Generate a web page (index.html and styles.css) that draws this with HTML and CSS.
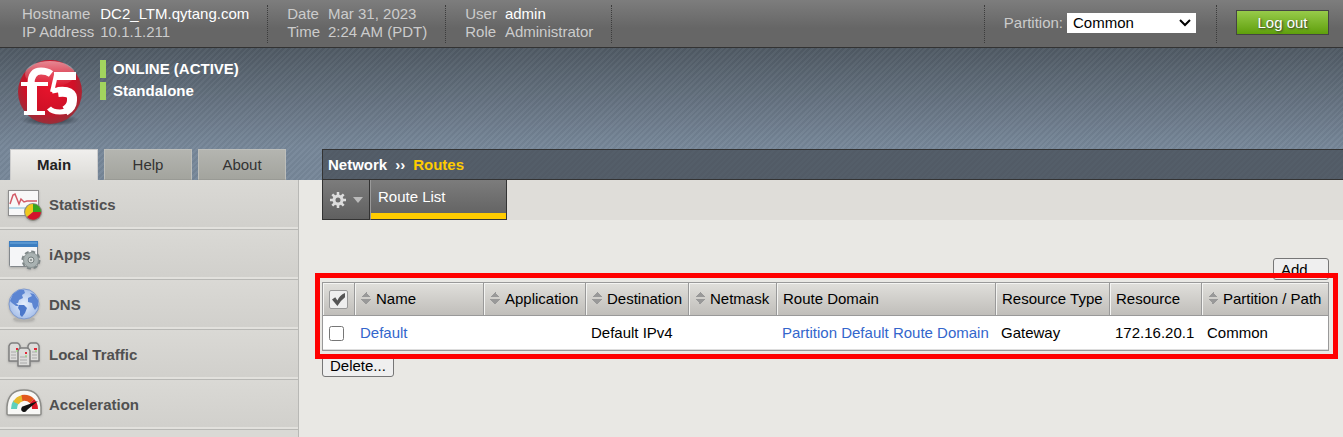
FILE: index.html
```html
<!DOCTYPE html>
<html lang="en">
<head>
<meta charset="utf-8">
<title>Network: Routes</title>
<link rel="stylesheet" href="styles.css">
</head>
<body>
<header class="topbar">
  <dl class="facts facts-host">
    <dt>Hostname</dt><dd class="strong">DC2_LTM.qytang.com</dd>
    <dt>IP Address</dt><dd>10.1.1.211</dd>
  </dl>
  <dl class="facts">
    <dt>Date</dt><dd>Mar 31, 2023</dd>
    <dt>Time</dt><dd>2:24 AM (PDT)</dd>
  </dl>
  <dl class="facts">
    <dt>User</dt><dd class="strong">admin</dd>
    <dt>Role</dt><dd>Administrator</dd>
  </dl>
  <div class="partition">
    <label for="partition">Partition:</label>
    <div class="select">
      <select id="partition"><option>Common</option></select>
      <svg class="select-arrow" viewBox="0 0 12 8"><path d="M1 1L6 6L11 1" fill="none" stroke="#000" stroke-width="2"/></svg>
    </div>
  </div>
  <div class="session"><button class="logout" type="button">Log out</button></div>
</header>

<div class="banner">
  <div class="brand">
    <div class="brand-row">
      <svg class="logo" viewBox="0 0 76 76" role="img" aria-label="f5">
        <defs>
          <radialGradient id="ball" cx=".5" cy=".42" r=".58">
            <stop offset="0" stop-color="#e8142c"/><stop offset=".65" stop-color="#d01027"/><stop offset="1" stop-color="#96303a"/>
          </radialGradient>
          <linearGradient id="gloss" x2="0" y2="1">
            <stop offset="0" stop-color="#fff" stop-opacity=".5"/><stop offset="1" stop-color="#fff" stop-opacity="0"/>
          </linearGradient>
          <radialGradient id="shade"><stop offset="0" stop-color="#1c222a" stop-opacity=".9"/><stop offset="1" stop-color="#1c222a" stop-opacity="0"/></radialGradient>
        </defs>
        <ellipse cx="38" cy="62" rx="30" ry="6" fill="url(#shade)"/>
        <circle cx="38" cy="34" r="32" fill="url(#ball)"/>
        <ellipse cx="38" cy="16" rx="25" ry="13" fill="url(#gloss)"/>
        <g fill="none" stroke="#fff">
          <path d="M20 55V24" stroke-width="10"/>
          <path d="M19 26Q19 13 29 13Q35 13 39 16" stroke-width="7"/>
          <path d="M9 26H36M12 55H33" stroke-width="4"/>
          <path d="M64 18H42" stroke-width="8"/>
          <path d="M44 17L40 34" stroke-width="4"/>
          <path d="M40 33Q62 28 62 42Q61 54 48 54Q40 54 37 50" stroke-width="5"/>
          <path d="M46 34Q61 32 60 42Q60 49 53 53" stroke-width="10"/>
        </g>
      </svg>
      <ul class="status">
        <li>ONLINE (ACTIVE)</li>
        <li>Standalone</li>
      </ul>
    </div>
    <nav class="tabs" aria-label="Sections">
      <a class="tab tab-on" href="#main">Main</a>
      <a class="tab" href="#help">Help</a>
      <a class="tab" href="#about">About</a>
    </nav>
  </div>
  <div class="crumbs"><span>Network</span><span>››</span><span class="crumb-now">Routes</span></div>
</div>

<div class="body">
  <nav class="side" aria-label="Main">
    <a class="side-item" href="#statistics">
      <svg class="side-icon" viewBox="0 0 36 36">
        <rect x="1.500" y="3.500" width="30" height="25" fill="#f8f8f8" stroke="#8d8d8d"/>
        <path d="M2 21H31" stroke="#b9d7e8" stroke-width="2"/>
        <path d="M3 17L6 8L8 7L12 17L14 12L17 15L20 14H30" fill="none" stroke="#d25a66" stroke-width="1.500"/>
        <circle cx="26" cy="25" r="9" fill="#8a8a80"/>
        <path d="M26 25V17A8 8 0 0 0 20 30Z" fill="#f0c81c"/>
        <path d="M26 25V17A8 8 0 0 1 34 25Z" fill="#37a51e"/>
        <path d="M26 25H34A8 8 0 0 1 20 30Z" fill="#d3142c"/>
      </svg>Statistics</a>
    <a class="side-item" href="#iapps">
      <svg class="side-icon" viewBox="0 0 36 36">
        <rect x="2.500" y="4.500" width="28" height="25" rx="1" fill="#f5f6f8" stroke="#83888c"/>
        <rect x="2" y="4" width="29" height="6" fill="#3c7ec1"/><path d="M3 6H30" stroke="#75aee0"/>
        <circle cx="24" cy="23" r="8.500" fill="none" stroke="#7c8586" stroke-width="2" stroke-dasharray="4 2.670"/>
        <circle cx="24" cy="23" r="7.500" fill="#a9b2b2" stroke="#8b9494"/>
        <circle cx="24" cy="23" r="3" fill="#d5d9d8" stroke="#778080"/><circle cx="24" cy="23" r="1" fill="#808888"/>
      </svg>iApps</a>
    <a class="side-item" href="#dns">
      <svg class="side-icon" viewBox="0 0 36 36">
        <defs><radialGradient id="sea"><stop offset="0" stop-color="#e4eefc"/><stop offset="1" stop-color="#a9c1ea"/></radialGradient></defs>
        <ellipse cx="17" cy="32" rx="11" ry="2" fill="#b4b3af"/>
        <circle cx="17" cy="17" r="15" fill="url(#sea)" stroke="#7f9ace"/>
        <path d="M3 14L6 7L12 3L17 3L18 6L15 8L16 11L12 13L11 16L9 16L12 19L9 19L5 16Z" fill="#5c85d2"/>
        <path d="M12 18L17 18L20 21L18 26L15 30L13 28L13 24L11 21Z" fill="#4c78cb"/>
        <path d="M23 6L27 7L31 13L31 19L28 23L26 20L25 16L21 15L21 11L25 9Z" fill="#5c85d2"/>
      </svg>DNS</a>
    <a class="side-item" href="#local-traffic">
      <svg class="side-icon" viewBox="0 0 36 36">
        <g fill="#dcdcda" stroke="#808080" stroke-width="1.500" stroke-linejoin="round">
          <path d="M2 24V9Q3 6 5 6H10Q12 6 13 9V24Z"/><path d="M21 24V9Q22 6 24 6H29Q31 6 32 9V24Z"/>
          <path d="M11 29V14Q12 11 14 11H20Q22 11 23 14V29Z"/>
        </g>
        <path d="M4 15H9M4 18H9M4 21H9M25 15H30M25 18H30M25 21H30M13 20H20M13 23H20M13 26H20" stroke="#aaa"/>
        <path d="M9 12H11M27 12H30M18 16H20" stroke="#e02938" stroke-width="2"/>
        <path d="M9 14H11M28 14H30M18 19H20" stroke="#83d669"/>
      </svg>Local Traffic</a>
    <a class="side-item" href="#acceleration">
      <svg class="side-icon" viewBox="0 0 36 36">
        <path d="M0 27V20Q1 3 17 3Q33 3 34 20V27Q34 28 32 28H2Q0 28 0 27Z" fill="#f8f8f6" stroke="#8c8c88" stroke-width="1.500"/>
        <g fill="none" stroke-width="6">
          <path d="M7 22Q7 18 9 15" stroke="#5fd0bd"/><path d="M9 16Q11 12 16 11" stroke="#e7b92c"/>
          <path d="M15 11Q21 10 25 14" stroke="#e2581e"/><path d="M25 14Q28 17 28 22" stroke="#db1727"/>
        </g>
        <path d="M31 14L20 23A3 3 0 1 1 17 19Z" fill="#111"/>
      </svg>Acceleration</a>
    <div class="side-rest"></div>
  </nav>

  <main class="main">
    <div class="menubar">
      <button class="gear" type="button" aria-label="Options">
        <svg class="gear-icon" viewBox="0 0 16 16"><circle cx="8" cy="8" r="4" fill="none" stroke="#ddd" stroke-width="3"/><path d="M8 0V3M8 13V16M0 8H3M13 8H16M2.300 2.300L4.500 4.500M11.500 11.500L13.700 13.700M2.300 13.700L4.500 11.500M11.500 4.500L13.700 2.300" stroke="#ddd" stroke-width="2.500"/></svg>
        <svg class="gear-caret" viewBox="0 0 10 6"><path d="M0 0H10L5 6Z" fill="#bbb"/></svg>
      </button>
      <a class="menu-tab" href="#route-list">Route List</a>
    </div>
    <div class="content">
      <div class="actions-top"><button class="btn" type="button">Add...</button></div>
      <div class="marked">
        <table class="routes">
          <colgroup><col class="c-check"><col><col class="c-app"><col class="c-dest"><col class="c-mask"><col class="c-domain"><col class="c-type"><col class="c-res"><col class="c-path"></colgroup>
          <thead>
            <tr>
              <th><button class="check-all" type="button" aria-label="Select all"><svg viewBox="0 0 12 12"><path d="M0 6L3 4L5 7Q7 2 12 0V4Q8 7 5 12Z" fill="#555"/></svg></button></th>
              <th><span class="sort"></span>Name</th>
              <th><span class="sort"></span>Application</th>
              <th><span class="sort"></span>Destination</th>
              <th><span class="sort"></span>Netmask</th>
              <th>Route Domain</th>
              <th>Resource Type</th>
              <th>Resource</th>
              <th><span class="sort"></span>Partition / Path</th>
            </tr>
          </thead>
          <tbody>
            <tr>
              <td><input class="pick" type="checkbox" aria-label="Select Default"></td>
              <td><a href="#default">Default</a></td>
              <td></td>
              <td>Default IPv4</td>
              <td></td>
              <td><a href="#domain">Partition Default Route Domain</a></td>
              <td>Gateway</td>
              <td>172.16.20.1</td>
              <td>Common</td>
            </tr>
          </tbody>
        </table>
      </div>
      <button class="btn" type="button">Delete...</button>
    </div>
  </main>
</div>
</body>
</html>
```
FILE: styles.css
```css
* { box-sizing: border-box; }
body {
  margin: 0;
  height: 100vh;
  display: flex;
  flex-direction: column;
  overflow: hidden;
  background: #e9e8e4;
  color: #000;
  font: 15px/18px "Liberation Sans", Arial, sans-serif;
}
a { color: #36c; text-decoration: none; }
button, select { font: inherit; }

.topbar {
  flex: none;
  display: flex;
  padding: 5px 14px 4px 2px;
  border-bottom: 1px solid #333;
  background: linear-gradient(#7d7d7d, #666 60%, #666);
  color: #ccc;
}
.facts {
  display: grid;
  grid-template-columns: auto auto;
  column-gap: 8px;
  align-content: start;
  margin: 0;
  padding: 0 18px 2px 19px;
  border-right: 1px dotted #3c3c3c;
}
.facts-host { column-gap: 6px; padding-left: 20px; }
.facts dd { margin: 0; }
.strong { color: #fff; }
.partition {
  display: flex;
  align-items: center;
  gap: 4px;
  margin-left: auto;
  padding: 0 20px 2px 19px;
  border-left: 1px dotted #3c3c3c;
  border-right: 1px dotted #3c3c3c;
}
.select { position: relative; }
.select select {
  display: block;
  width: 129px;
  height: 20px;
  padding: 0 6px;
  border: 0;
  border-radius: 0;
  appearance: none;
  background: #fff;
  color: #000;
}
.select-arrow {
  position: absolute;
  top: 6px;
  right: 5px;
  width: 12px;
  height: 8px;
  pointer-events: none;
}
.session { padding: 5px 0 0 19px; }
.logout {
  display: block;
  width: 93px;
  height: 25px;
  padding: 0;
  border: 1px solid #444;
  background: linear-gradient(#97cb4a, #5f9f0c);
  color: #fff;
  text-shadow: 1px 1px 2px #333;
}

.banner {
  flex: none;
  display: flex;
  align-items: flex-end;
  height: 132px;
  background:
    repeating-linear-gradient(135deg, rgba(0, 0, 0, .03) 0 2px, rgba(255, 255, 255, .03) 2px 4px),
    linear-gradient(#505a64, #778799 75%);
}
.brand {
  flex: none;
  display: flex;
  flex-direction: column;
  justify-content: space-between;
  width: 322px;
  height: 100%;
}
.brand-row { display: flex; padding: 10px 0 0 12px; }
.logo { width: 76px; height: 76px; }
.status {
  display: grid;
  gap: 4px;
  align-content: start;
  margin: 2px 0 0 12px;
  padding: 0;
  list-style: none;
  color: #fff;
  font-weight: bold;
}
.status li { padding-left: 7px; border-left: 6px solid #a2d45e; }
.tabs { display: flex; gap: 6px; padding-left: 10px; }
.tab {
  width: 88px;
  height: 31px;
  border: 1px solid #bdbeba;
  border-bottom-color: #999a95;
  background: linear-gradient(#b4b5b0, #a3a49e);
  color: #333;
  line-height: 30px;
  text-align: center;
}
.tab-on {
  border-color: #ccc;
  border-bottom: 0;
  background: linear-gradient(#f0efed, #dcdbd7);
  color: #222;
  font-weight: bold;
}
.crumbs {
  flex: 1;
  display: flex;
  gap: 8px;
  height: 31px;
  padding-left: 5px;
  border: 1px solid #333;
  border-right: 0;
  background: repeating-linear-gradient(135deg, #525b66 0 2px, #545e69 2px 4px);
  color: #fff;
  font-weight: bold;
  line-height: 29px;
}
.crumb-now { color: #fc0; }

.body { flex: 1; display: flex; min-height: 0; }
.side {
  flex: none;
  display: flex;
  flex-direction: column;
  width: 299px;
  border-right: 1px solid #b8b8b5;
}
.side-item {
  flex: none;
  display: flex;
  align-items: center;
  gap: 6px;
  height: 50px;
  padding-left: 7px;
  border-bottom: 1px solid #b8b8b5;
  background: linear-gradient(#dad9d5, #d1d0cc) 0 0 / 100% 47px no-repeat #e2e1dd;
  color: #505050;
  font-weight: bold;
}
.side-icon { width: 36px; height: 36px; overflow: visible; filter: drop-shadow(0 1px 1px #8888); }
.side-rest { flex: 1; background: #dad9d5; }

.main { flex: 1; min-width: 0; padding-left: 23px; }
.menubar { display: flex; height: 40px; background: #dfddd9; }
.gear, .menu-tab {
  border: 1px solid #333;
  border-top: 0;
  background: linear-gradient(#7c7c7c, #606060);
}
.gear {
  display: flex;
  align-items: center;
  gap: 7px;
  width: 48px;
  padding: 0 7px;
}
.gear-icon { flex: none; width: 16px; height: 16px; }
.gear-caret { flex: none; width: 10px; height: 6px; }
.menu-tab {
  width: 137px;
  padding: 8px 7px;
  border-left: 1px solid #999;
  box-shadow: inset 0 -6px #fc0;
  color: #fff;
}

.content { padding: 38px 14px 0 0; }
.actions-top { display: flex; justify-content: flex-end; }
.btn {
  display: block;
  height: 22px;
  padding: 0 7px;
  border: 1px solid #767676;
  border-radius: 3px;
  background: #efefef;
  color: #000;
}
.actions-top .btn { width: 56px; padding-top: 2px; text-align: left; }
.marked { position: relative; margin: 2px 0 4px; }
.marked::after {
  content: "";
  position: absolute;
  inset: -9px -9px -8px -7px;
  border: 5px solid #f00;
  pointer-events: none;
}
.routes {
  width: 100%;
  table-layout: fixed;
  border-collapse: separate;
  border-spacing: 0;
  border: 1px solid #999;
  background: #fff;
  box-shadow: inset 0 -1px #ddd;
  white-space: nowrap;
}
.c-check { width: 32px; }
.c-app { width: 102px; }
.c-dest { width: 103px; }
.c-mask { width: 88px; }
.c-domain { width: 219px; }
.c-type { width: 114px; }
.c-res { width: 92px; }
.c-path { width: 126px; }
.routes th {
  height: 33px;
  padding: 0 0 0 6px;
  border-bottom: 1px solid #999;
  border-right: 1px solid #999;
  background: linear-gradient(#e0dfdb, #c0beba);
  box-shadow: inset 1px 1px #f4f4f2;
  font-weight: normal;
  text-align: left;
}
.routes th:last-child { border-right: 0; }
.routes td { height: 34px; padding: 0 0 0 5px; }
.routes th:first-child, .routes td:first-child { padding-left: 6px; }
.sort {
  display: inline-block;
  width: 10px;
  height: 12px;
  margin-right: 5px;
  background:
    conic-gradient(from 135deg at 50% 0, #999 90deg, transparent 0) 0 0 / 10px 5px no-repeat,
    conic-gradient(from -45deg at 50% 100%, #999 90deg, transparent 0) 0 100% / 10px 5px no-repeat;
}
.check-all {
  display: grid;
  place-items: center;
  width: 19px;
  height: 19px;
  padding: 0;
  border: 1px solid #999;
  border-radius: 2px;
  background: #eee;
}
.check-all svg { width: 13px; height: 13px; }
.pick { display: block; width: 15px; height: 15px; margin: 0; }
```
